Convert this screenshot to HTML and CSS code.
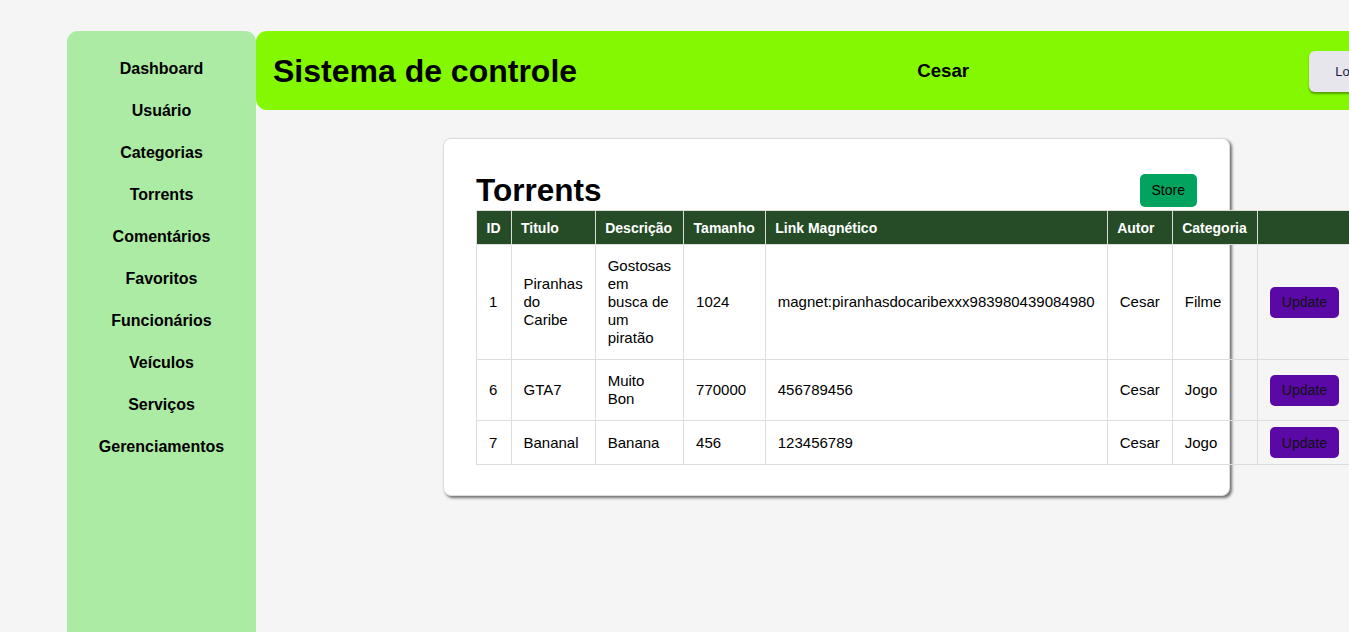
FILE: index.html
```html
<!DOCTYPE html>
<html lang="pt-BR">
<head>
<meta charset="utf-8">
<title>Sistema de controle</title>
<link rel="stylesheet" href="styles.css">
</head>
<body>
<div class="layout">
  <nav class="sidebar">
    <a class="nav-item" href="#">Dashboard</a>
    <a class="nav-item" href="#">Usuário</a>
    <a class="nav-item" href="#">Categorias</a>
    <a class="nav-item" href="#">Torrents</a>
    <a class="nav-item" href="#">Comentários</a>
    <a class="nav-item" href="#">Favoritos</a>
    <a class="nav-item" href="#">Funcionários</a>
    <a class="nav-item" href="#">Veículos</a>
    <a class="nav-item" href="#">Serviços</a>
    <a class="nav-item" href="#">Gerenciamentos</a>
  </nav>
  <main class="main">
    <header class="topbar">
      <h1 class="brand">Sistema de controle</h1>
      <h3 class="user">Cesar</h3>
      <button class="logout">Logout</button>
    </header>
    <section class="card">
      <div class="card-head">
        <h2 class="card-title">Torrents</h2>
        <button class="btn-store">Store</button>
      </div>
      <table class="grid">
        <thead>
          <tr>
            <th>ID</th>
            <th>Titulo</th>
            <th>Descrição</th>
            <th>Tamanho</th>
            <th>Link Magnético</th>
            <th>Autor</th>
            <th>Categoria</th>
            <th></th>
          </tr>
        </thead>
        <tbody>
          <tr>
            <td>1</td>
            <td>Piranhas do Caribe</td>
            <td>Gostosas em busca de um piratão</td>
            <td>1024</td>
            <td>magnet:piranhasdocaribexxx983980439084980</td>
            <td>Cesar</td>
            <td>Filme</td>
            <td class="actions"><button class="btn-update">Update</button></td>
          </tr>
          <tr>
            <td>6</td>
            <td>GTA7</td>
            <td>Muito Bon</td>
            <td>770000</td>
            <td>456789456</td>
            <td>Cesar</td>
            <td>Jogo</td>
            <td class="actions"><button class="btn-update">Update</button></td>
          </tr>
          <tr>
            <td>7</td>
            <td>Bananal</td>
            <td>Banana</td>
            <td>456</td>
            <td>123456789</td>
            <td>Cesar</td>
            <td>Jogo</td>
            <td class="actions"><button class="btn-update">Update</button></td>
          </tr>
        </tbody>
      </table>
    </section>
  </main>
</div>
</body>
</html>
```

FILE: styles.css
```css
html, body {
  margin: 0;
  padding: 0;
  overflow: hidden;
  height: 100%;
}

body {
  background: #f5f5f5;
  font-family: "Liberation Sans", Arial, sans-serif;
  color: #000;
}

.layout {
  display: flex;
  align-items: flex-start;
  padding: 31px 0 0 67px;
}

.sidebar {
  flex: 0 0 189px;
  min-height: 700px;
  background: #aceba4;
  border-radius: 11px 11px 0 0;
  padding-top: 17px;
  display: flex;
  flex-direction: column;
  box-sizing: border-box;
}

.nav-item {
  display: block;
  text-align: center;
  font-size: 16px;
  font-weight: bold;
  line-height: 18px;
  padding: 12px 0;
  color: #000;
  text-decoration: none;
}

.main {
  flex: 0 0 1162px;
  width: 1162px;
}

.topbar {
  height: 79px;
  background: #84f800;
  border-radius: 11px;
  display: flex;
  align-items: center;
  justify-content: space-between;
  padding: 1px 17px 0;
  box-sizing: border-box;
}

.brand {
  margin: 0;
  font-size: 32px;
  font-weight: bold;
}

.user {
  margin: 0;
  font-size: 18.72px;
  font-weight: bold;
}

.logout {
  font-family: "Liberation Sans", Arial, sans-serif;
  font-size: 13px;
  color: #1c1c3c;
  background: #e6e6ec;
  border: none;
  border-radius: 6px;
  padding: 13px 26px;
  box-shadow: 0 2px 2px rgba(0, 0, 0, 0.35);
}

.card {
  box-sizing: border-box;
  width: 787px;
  margin: 28px 0 0 187px;
  background: #fff;
  border: 1px solid #dcdcdc;
  border-radius: 8px;
  box-shadow: 2px 2px 3px rgba(0, 0, 0, 0.55);
  padding: 31px 32px 30px 32px;
}

.card-head {
  display: flex;
  align-items: center;
  justify-content: space-between;
  height: 40px;
}

.card-title {
  margin: 0;
  font-size: 31.5px;
  font-weight: bold;
}

.btn-store {
  font-family: "Liberation Sans", Arial, sans-serif;
  font-size: 14px;
  color: #000;
  background: #02a35f;
  border: none;
  border-radius: 5px;
  height: 33px;
  padding: 0 12px;
}

.grid {
  width: 100%;
  border-collapse: collapse;
  font-size: 15px;
  line-height: 18px;
}

.grid th {
  background: #264c27;
  color: #fff;
  font-size: 14px;
  font-weight: bold;
  line-height: 16px;
  text-align: left;
  padding: 8.5px 10px 8.5px 9.5px;
  border: 1px solid #dddddd;
  white-space: nowrap;
}

.grid td {
  padding: 12px;
  border: 1px solid #dddddd;
  vertical-align: middle;
}

.grid td.actions {
  padding: 6px 12px;
}

.btn-update {
  font-family: "Liberation Sans", Arial, sans-serif;
  font-size: 14px;
  color: #111;
  background: #5a09a6;
  border: none;
  border-radius: 5px;
  height: 31px;
  padding: 0 12px;
}
```
